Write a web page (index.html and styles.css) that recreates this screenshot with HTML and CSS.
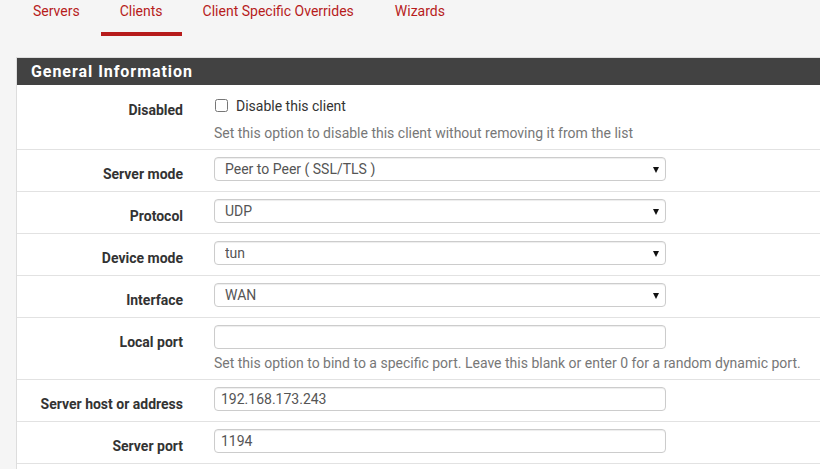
FILE: index.html
```html
<!DOCTYPE html>
<html>
<head>
<meta charset="utf-8">
<link rel="stylesheet" href="styles.css">
</head>
<body>
<nav class="tabs">
  <a class="tab">Servers</a>
  <a class="tab active">Clients</a>
  <a class="tab">Client Specific Overrides</a>
  <a class="tab">Wizards</a>
</nav>
<div class="panel">
  <div class="panel-heading">General Information</div>
  <div class="row help-row check-row">
    <div class="label">Disabled</div>
    <div class="field">
      <label class="check"><input type="checkbox"><span>Disable this client</span></label>
      <div class="help">Set this option to disable this client without removing it from the list</div>
    </div>
  </div>
  <div class="row">
    <div class="label">Server mode</div>
    <div class="field"><div class="select-wrap"><select class="control"><option>Peer to Peer ( SSL/TLS )</option></select></div></div>
  </div>
  <div class="row">
    <div class="label">Protocol</div>
    <div class="field"><div class="select-wrap"><select class="control"><option>UDP</option></select></div></div>
  </div>
  <div class="row">
    <div class="label">Device mode</div>
    <div class="field"><div class="select-wrap"><select class="control"><option>tun</option></select></div></div>
  </div>
  <div class="row">
    <div class="label">Interface</div>
    <div class="field"><div class="select-wrap"><select class="control"><option>WAN</option></select></div></div>
  </div>
  <div class="row help-row">
    <div class="label">Local port</div>
    <div class="field">
      <input class="control text" type="text" value="">
      <div class="help">Set this option to bind to a specific port. Leave this blank or enter 0 for a random dynamic port.</div>
    </div>
  </div>
  <div class="row">
    <div class="label">Server host or address</div>
    <div class="field"><input class="control text" type="text" value="192.168.173.243"></div>
  </div>
  <div class="row">
    <div class="label">Server port</div>
    <div class="field"><input class="control text" type="text" value="1194"></div>
  </div>
</div>
</body>
</html>
```
FILE: styles.css
```css
html, body {
  margin: 0;
  padding: 0;
}
body {
  background: #f5f5f5;
  font-family: Roboto, "Liberation Sans", sans-serif;
  font-size: 14px;
  color: #333;
  overflow: hidden;
}
.tabs {
  display: flex;
  gap: 2px;
  margin-left: 14px;
}
.tab {
  display: block;
  padding: 1px 19px 11px;
  line-height: 20px;
  color: #b71c1c;
  border-bottom: 4px solid transparent;
  cursor: pointer;
}
.tab:last-child {
  margin-left: 1px;
}
.tab.active {
  border-bottom-color: #b71c1c;
}
.panel {
  margin: 21px 0 0 16px;
  padding-bottom: 40px;
  background: #fff;
  border-left: 1px solid #ddd;
  border-top: 1px solid #ddd;
}
.panel-heading {
  background: #424242;
  color: #fff;
  height: 27px;
  line-height: 27px;
  padding-left: 14px;
  font-size: 16px;
  font-weight: 700;
  letter-spacing: 0.95px;
}
.row {
  display: flex;
  padding: 7px 0 10px;
  border-bottom: 1px solid #e2e2e2;
}
.row.help-row {
  padding-bottom: 6px;
}
.label {
  flex: 0 0 182px;
  box-sizing: border-box;
  padding: 10px 16px 0 0;
  text-align: right;
  font-weight: 700;
  line-height: 14px;
  white-space: nowrap;
}
.check-row .label {
  padding-top: 11px;
}
.field {
  padding-left: 15px;
}
.check {
  display: flex;
  align-items: center;
  height: 27px;
  line-height: 20px;
}
.check input {
  margin: 0 8px 0 1px;
  width: 13px;
  height: 13px;
}
.help {
  margin-top: 4px;
  line-height: 20px;
  color: #777;
}
.select-wrap {
  position: relative;
  width: 452px;
}
.select-wrap::after {
  content: "";
  position: absolute;
  right: 7px;
  top: 10px;
  border-left: 3.5px solid transparent;
  border-right: 3.5px solid transparent;
  border-top: 6px solid #111;
  pointer-events: none;
}
.control {
  display: block;
  box-sizing: border-box;
  width: 452px;
  height: 24px;
  border: 1px solid #ccc;
  border-radius: 4px;
  background: #fff;
  box-shadow: inset 0 1px 1px rgba(0, 0, 0, 0.075);
  font-family: Roboto, "Liberation Sans", sans-serif;
  font-size: 14px;
  color: #555;
  margin: 0;
  outline: none;
}
select.control {
  appearance: none;
  -webkit-appearance: none;
  padding: 0 20px 0 10px;
}
.control.text {
  padding: 0 6px;
}
```
